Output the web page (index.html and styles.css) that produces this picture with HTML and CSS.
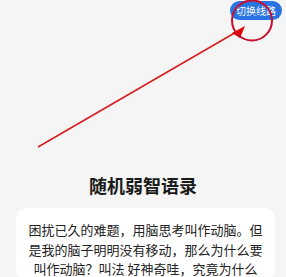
FILE: index.html
```html
<!DOCTYPE html>
<html lang="zh">
<head>
<meta charset="utf-8">
<link rel="stylesheet" href="styles.css">
</head>
<body>
<div class="page">
  <div class="topbar">
    <button class="switch">切换线路</button>
  </div>
  <h1 class="title">随机弱智语录</h1>
  <div class="card">
    <p class="quote">困扰已久的难题，用脑思考叫作动脑。但是我的脑子明明没有移动，那么为什么要叫作动脑？叫法 好神奇哇，究竟为什么</p>
  </div>
</div>
<svg class="annot" width="286" height="277" viewBox="0 0 286 277">
  <line x1="38" y1="147" x2="238" y2="31" stroke="#d81b1b" stroke-width="1.5"/>
  <polygon points="232,33 245,26 240,38" fill="#e50000"/>
  <circle cx="252" cy="20.5" r="20" fill="none" stroke="#c8102e" stroke-width="2"/>
</svg>
</body>
</html>
```
FILE: styles.css
```css
html, body {
  margin: 0;
  padding: 0;
}
body {
  background: #f5f5f5;
  font-family: "Noto Sans CJK SC", "Noto Sans", sans-serif;
  width: 286px;
  height: 277px;
  overflow: hidden;
  position: relative;
}
.page {
  display: flex;
  flex-direction: column;
}
.topbar {
  display: flex;
  justify-content: flex-end;
  padding: 1px 4px 0 0;
}
.switch {
  background: #2874e2;
  color: #fff;
  border: none;
  height: 19px;
  padding: 0 6px;
  border-radius: 10px;
  font-family: "Noto Sans CJK SC", sans-serif;
  font-size: 10px;
  line-height: 19px;
}
.title {
  margin: 153px 0 0 0;
  text-align: center;
  font-size: 18px;
  line-height: 24px;
  font-weight: 700;
  color: #1a1a1a;
}
.card {
  margin: 11px 11px 0 16px;
  background: #fff;
  border-radius: 10px;
  padding: 12px 12px 0 12px;
}
.quote {
  margin: 0;
  font-size: 13px;
  line-height: 19.5px;
  text-align: center;
  color: #222;
}
.annot {
  position: absolute;
  left: 0;
  top: 0;
  pointer-events: none;
}
```
